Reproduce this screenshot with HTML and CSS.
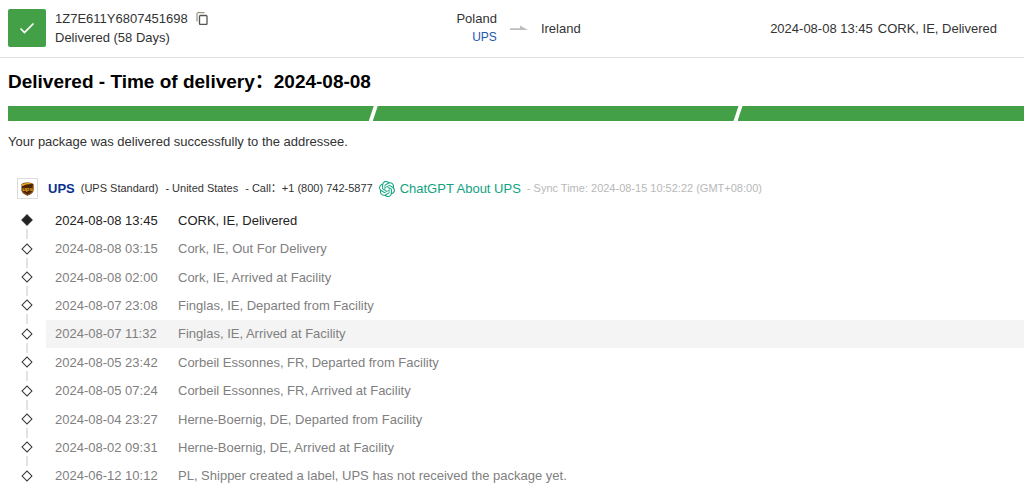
FILE: index.html
```html
<!DOCTYPE html>
<html lang="en">
<head>
<meta charset="utf-8">
<meta name="viewport" content="width=device-width, initial-scale=1">
<title>Package tracking</title>
<link rel="stylesheet" href="styles.css">
</head>
<body>
<header class="summary">
  <div class="parcel">
    <span class="status-icon">
      <svg width="38" height="38" viewBox="0 0 38 38" fill="none" stroke="#fff" stroke-width="1.700" aria-hidden="true"><path d="M12.500 19.500l4 4L25.500 14.500"/></svg>
    </span>
    <div class="parcel-text">
      <div class="number">1Z7E611Y6807451698
        <button class="copy" type="button" aria-label="Copy tracking number">
          <svg width="12" height="13" viewBox="0 0 12 13" fill="none" stroke="#555" aria-hidden="true"><path d="M1 9.500V1.200Q1 .7 1.500.7H8.500" stroke="#8a7a68"/><rect x="3.500" y="3.500" width="7.500" height="9" rx="1" stroke-width="1.300"/></svg>
        </button>
      </div>
      <div>Delivered (58 Days)</div>
    </div>
  </div>
  <div class="route">
    <div class="origin">
      <div>Poland</div>
      <a class="carrier-link" href="#carrier">UPS</a>
    </div>
    <svg width="18" height="6" viewBox="0 0 18 6" aria-hidden="true"><path d="M0 3.200H10V.5L18 5H0Z" fill="#bdbdbd"/></svg>
    <div>Ireland</div>
  </div>
  <div class="latest"><time>2024-08-08 13:45</time><span>CORK, IE, Delivered</span></div>
</header>
<main class="details">
  <h1 class="title">Delivered - Time of delivery：2024-08-08</h1>
  <div class="progress" role="img" aria-label="All stages complete">
    <span class="stage"></span><span class="stage"></span><span class="stage"></span>
  </div>
  <p class="message">Your package was delivered successfully to the addressee.</p>
  <div class="carrier" id="carrier">
    <span class="logo">
      <svg width="13" height="14" viewBox="0 0 13 14" aria-hidden="true"><path d="M.5 2Q6.500-.8 12.500 2V8.200Q12.500 11.200 6.500 13.700Q.5 11.200.5 8.200Z" fill="#4b2409"/><path d="M1 4.300V2.300Q6.500-.2 12 2.100Q5.500 1.600 1 4.300Z" fill="#f3ae16"/><path d="M1 8Q1 10.800 6.500 13Q12 10.800 12 8V3" fill="none" stroke="#ad6b12" stroke-width=".8"/><text class="logo-text" x="6.500" y="8.700" text-anchor="middle">ups</text></svg>
    </span>
    <a class="carrier-name" href="#carrier">UPS</a>
    <span class="carrier-info"><span>(UPS Standard)</span><span>- United States</span><span>- Call：+1 (800) 742-5877</span></span>
    <a class="chat" href="#chat">
      <svg width="16" height="16" viewBox="0 0 24 24" fill="#10a37f" aria-hidden="true"><path d="M22.2819 9.8211a5.9847 5.9847 0 0 0-.5157-4.9108 6.0462 6.0462 0 0 0-6.5098-2.9A6.0651 6.0651 0 0 0 4.9807 4.1818a5.9847 5.9847 0 0 0-3.9977 2.9 6.0462 6.0462 0 0 0 .7427 7.0966 5.98 5.98 0 0 0 .511 4.9107 6.051 6.051 0 0 0 6.5146 2.9001A5.9847 5.9847 0 0 0 13.2599 24a6.0557 6.0557 0 0 0 5.7718-4.2058 5.9894 5.9894 0 0 0 3.9977-2.9001 6.0557 6.0557 0 0 0-.7475-7.0729zm-9.022 12.6081a4.4755 4.4755 0 0 1-2.8764-1.0408l.1419-.0804 4.7783-2.7582a.7948.7948 0 0 0 .3927-.6813v-6.7369l2.02 1.1686a.071.071 0 0 1 .038.052v5.5826a4.504 4.504 0 0 1-4.4945 4.4944zm-9.6607-4.1254a4.4708 4.4708 0 0 1-.5346-3.0137l.142.0852 4.783 2.7582a.7712.7712 0 0 0 .7806 0l5.8428-3.3685v2.3324a.0804.0804 0 0 1-.0332.0615L9.74 19.9502a4.4992 4.4992 0 0 1-6.1408-1.6464zM2.3408 7.8956a4.485 4.485 0 0 1 2.3655-1.9728V11.6a.7664.7664 0 0 0 .3879.6765l5.8144 3.3543-2.0201 1.1685a.0757.0757 0 0 1-.071 0l-4.8303-2.7865A4.504 4.504 0 0 1 2.3408 7.872zm16.5963 3.8558L13.1038 8.364 15.1192 7.2a.0757.0757 0 0 1 .071 0l4.8303 2.7913a4.4944 4.4944 0 0 1-.6765 8.1042v-5.6772a.79.79 0 0 0-.407-.667zm2.0107-3.0231l-.142-.0852-4.7735-2.7818a.7759.7759 0 0 0-.7854 0L9.409 9.2297V6.8974a.0662.0662 0 0 1 .0284-.0615l4.8303-2.7866a4.4992 4.4992 0 0 1 6.6802 4.66zM8.3065 12.863l-2.02-1.1638a.0804.0804 0 0 1-.038-.0567V6.0742a4.4992 4.4992 0 0 1 7.3757-3.4537l-.142.0805L8.704 5.459a.7948.7948 0 0 0-.3927.6813zm1.0976-2.3654l2.602-1.4998 2.6069 1.4998v2.9994l-2.5974 1.4997-2.6067-1.4997Z"/></svg>
      <span>ChatGPT About UPS</span>
    </a>
    <span class="sync">- Sync Time: 2024-08-15 10:52:22 (GMT+08:00)</span>
  </div>
  <ol class="events">
    <li class="event current"><span class="marker"></span><div class="entry"><time>2024-08-08 13:45</time><span>CORK, IE, Delivered</span></div></li>
    <li class="event"><span class="marker"></span><div class="entry"><time>2024-08-08 03:15</time><span>Cork, IE, Out For Delivery</span></div></li>
    <li class="event"><span class="marker"></span><div class="entry"><time>2024-08-08 02:00</time><span>Cork, IE, Arrived at Facility</span></div></li>
    <li class="event"><span class="marker"></span><div class="entry"><time>2024-08-07 23:08</time><span>Finglas, IE, Departed from Facility</span></div></li>
    <li class="event hovered"><span class="marker"></span><div class="entry"><time>2024-08-07 11:32</time><span>Finglas, IE, Arrived at Facility</span></div></li>
    <li class="event"><span class="marker"></span><div class="entry"><time>2024-08-05 23:42</time><span>Corbeil Essonnes, FR, Departed from Facility</span></div></li>
    <li class="event"><span class="marker"></span><div class="entry"><time>2024-08-05 07:24</time><span>Corbeil Essonnes, FR, Arrived at Facility</span></div></li>
    <li class="event"><span class="marker"></span><div class="entry"><time>2024-08-04 23:27</time><span>Herne-Boernig, DE, Departed from Facility</span></div></li>
    <li class="event"><span class="marker"></span><div class="entry"><time>2024-08-02 09:31</time><span>Herne-Boernig, DE, Arrived at Facility</span></div></li>
    <li class="event"><span class="marker"></span><div class="entry"><time>2024-06-12 10:12</time><span>PL, Shipper created a label, UPS has not received the package yet.</span></div></li>
  </ol>
</main>
</body>
</html>
```

FILE: styles.css
```css
*, *::before, *::after { box-sizing: border-box; }

body {
  display: flex;
  flex-direction: column;
  min-height: 100vh;
  margin: 0;
  background: #fff;
  color: #333;
  font: 13px/19px "Liberation Sans", "Noto Sans CJK SC", sans-serif;
}

a { text-decoration: none; }

.summary {
  display: grid;
  grid-template-columns: 14fr auto 13fr;
  align-items: center;
  padding: 9px 27px 10px 8px;
  border-bottom: 1px solid #e3e3e3;
}

.parcel { display: flex; align-items: center; gap: 9px; }
.status-icon {
  display: flex;
  border-radius: 2px;
  background: #43a047;
}
.number { display: flex; align-items: center; gap: 8px; }
.copy { display: flex; padding: 0; border: 0; background: none; }

.route { display: flex; align-items: center; gap: 13px; }
.origin { text-align: right; line-height: 18px; }
.carrier-link { color: #2457b0; font-size: 12px; }
.latest { display: flex; justify-content: flex-end; gap: 5px; }

.details {
  display: flex;
  flex: 1;
  flex-direction: column;
  padding: 12px 0 5px 8px;
}

.title {
  margin: 0;
  color: #000;
  font-size: 19px;
  line-height: 24px;
}

.progress { display: flex; margin-top: 12px; overflow: hidden; }
.stage {
  flex: 0 0 36%;
  height: 15px;
  background: #43a047;
  clip-path: polygon(5px 0, 100% 0, calc(100% - 5px) 100%, 0 100%);
}
.stage:first-child { clip-path: polygon(0 0, 100% 0, calc(100% - 5px) 100%, 0 100%); }
.stage + .stage { margin-left: -1px; }

.message { margin: 11px 0 27px; }

.carrier {
  display: flex;
  align-items: center;
  padding-left: 9px;
  font-size: 11px;
}
.logo {
  display: flex;
  align-items: center;
  justify-content: center;
  width: 21px;
  height: 21px;
  border: 1px solid #ddd;
}
.logo-text { fill: #f3ae16; font-size: 6px; font-weight: bold; }
.carrier-name {
  margin: 0 6px 0 10px;
  color: #0b2f8f;
  font-size: 13px;
  font-weight: bold;
}
.carrier-info { display: flex; gap: 7px; }
.chat {
  display: flex;
  align-items: center;
  gap: 5px;
  margin: 0 6px;
  color: #10a37f;
  font-size: 13px;
}
.sync { color: #b8b8b8; }

.events {
  display: flex;
  flex: 1;
  flex-direction: column;
  margin: 7px 0 0;
  padding: 0;
  list-style: none;
  color: #808080;
}
.event {
  display: grid;
  grid-template-columns: 38px 1fr;
  flex: 1;
}
.marker {
  position: relative;
  display: grid;
  place-items: center;
}
.marker::before {
  width: 8px;
  height: 8px;
  border: 1px solid #333;
  content: "";
  transform: rotate(45deg);
}
.event:not(:last-child) .marker::after {
  position: absolute;
  top: calc(50% + 9px);
  left: 50%;
  width: 2px;
  height: 10px;
  margin-left: -1px;
  background: #e3e3e3;
  content: "";
}
.entry {
  display: grid;
  grid-template-columns: 105px 1fr;
  align-items: center;
  gap: 18px;
  padding-left: 9px;
}
.current { color: #222; }
.current .marker::before { background: #222; }
.hovered .entry { background: #f4f4f4; }
```
